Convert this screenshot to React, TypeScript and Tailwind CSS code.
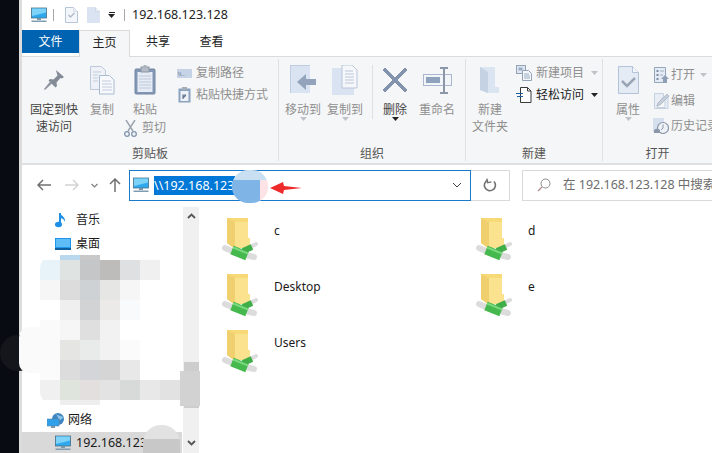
import React from "react";

const cjk = { fontFamily: '"Noto Sans","Noto Sans CJK SC",sans-serif' };

function Monitor({ w = 16, h = 16 }: { w?: number; h?: number }) {
  return (
    <svg width={w} height={h} viewBox="0 0 16 16" className="shrink-0">
      <rect x="0.5" y="1" width="15" height="10" fill="#2fa8ee" stroke="#4a6f86" strokeWidth="0.8" />
      <path d="M1 1.5h14v4L1 9z" fill="#7dd2f8" />
      <rect x="6" y="11" width="4" height="2" fill="#7c97a8" />
      <rect x="0.5" y="13.5" width="15" height="1.5" fill="#7f9cb0" />
    </svg>
  );
}

function DocSheet({ check }: { check?: boolean }) {
  return (
    <svg width="13" height="16" viewBox="0 0 13 16" className="shrink-0">
      <path d="M.5.5h8l4 4v11H.5z" fill={check ? "#f3f6fb" : "#d9e3f1"} stroke={check ? "#b7c5d8" : "#d9e3f1"} />
      <path d="M8.5.5v4h4" fill="#eef2f8" stroke="#c2cede" strokeWidth="0.6" />
      {check && <path d="M3.5 8l2 2 4-4" fill="none" stroke="#a9b4c2" strokeWidth="1.2" />}
    </svg>
  );
}

function Pin() {
  return (
    <svg width="22" height="22" viewBox="0 0 22 22">
      <path d="M13 1l8 7-2 1.500-1.500-.5-4 4.500.5 3.500-1.500 1.500-7-7 1.500-1.500 3.500.5 4-4-.5-1.500z" fill="#838b96" />
      <path d="M7.500 12L1 20l1 1 7-6.500z" fill="#8f969f" />
    </svg>
  );
}

function Copy() {
  return (
    <svg width="25" height="29" viewBox="0 0 25 29">
      <path d="M.5.500h11l4 4v19H.5z" fill="#eef2f8" stroke="#bcc9da" />
      <path d="M9.500 9.500h10l4.500 4.500v14H9.500z" fill="#f7f9fc" stroke="#a9bbd1" />
      <path d="M3 6h8M3 9h5M3 12h5M3 15h5M12 15h9M12 18h10M12 21h10M12 24h10" stroke="#c2cddb" />
    </svg>
  );
}

function Paste() {
  return (
    <svg width="22" height="30" viewBox="0 0 22 30">
      <rect x="1" y="4" width="20" height="25" rx="1" fill="#8397b4" stroke="#7388a6" />
      <rect x="3.500" y="7" width="15" height="20" fill="#e6ecf5" />
      <path d="M5 11h12M5 14h12M5 17h12M5 20h12M5 23h12" stroke="#bcc8d8" />
      <rect x="7" y="2" width="8" height="5" fill="#b4bcc6" stroke="#8c96a3" />
      <rect x="9.500" y="0" width="3" height="3" fill="#aab2bc" />
    </svg>
  );
}

function Scissors() {
  return (
    <svg width="13" height="17" viewBox="0 0 13 17">
      <path d="M2 0l7 11M11 0L4 11" stroke="#9aa3ad" strokeWidth="1.400" fill="none" />
      <circle cx="3" cy="14" r="2.300" fill="none" stroke="#7f93ad" strokeWidth="1.300" />
      <circle cx="10" cy="14" r="2.300" fill="none" stroke="#7f93ad" strokeWidth="1.300" />
    </svg>
  );
}

function PathIcon() {
  return (
    <svg width="15" height="9" viewBox="0 0 15 9">
      <rect width="15" height="9" fill="#c6d3e6" />
      <text x="1" y="7" fontSize="6" fill="#59667a" fontFamily="Liberation Sans">\\..</text>
    </svg>
  );
}

function ShortcutIcon() {
  return (
    <svg width="13" height="16" viewBox="0 0 13 16">
      <rect x="0.500" y="1.500" width="12" height="14" fill="#8ba2bf" />
      <rect x="2.500" y="4" width="8" height="10" fill="#eef2f8" />
      <rect x="4" y="0" width="5" height="3" fill="#a4acb6" />
      <path d="M5 12V8h3M8 8L5 11" stroke="#64778f" strokeWidth="1.200" fill="none" />
    </svg>
  );
}

function MoveTo() {
  return (
    <svg width="27" height="30" viewBox="0 0 27 30">
      <path d="M0 0h20v28H0z" fill="#d9e3f1" />
      <path d="M0 0h20v1H1v27H0z" fill="#bfcde0" />
      <path d="M26 14h-10v-5l-9 8 9 8v-5h10z" fill="#92a3bb" />
    </svg>
  );
}

function CopyTo() {
  return (
    <svg width="26" height="30" viewBox="0 0 26 30">
      <path d="M0 3h22v27H0z" fill="#d9e3f1" />
      <path d="M10 0h10l5 5v18H10z" fill="#f5f7fb" stroke="#b8c5d6" />
      <path d="M13 6h8M13 9h9M13 12h9M13 15h9M13 18h9" stroke="#bcc7d6" />
    </svg>
  );
}

function DeleteX() {
  return (
    <svg width="26" height="26" viewBox="0 0 26 26">
      <path d="M3 1L1 3l10 10L1 23l2 2 10-10 10 10 2-2-10-10L25 3l-2-2-10 10z" fill="#8493ad" stroke="#8493ad" />
    </svg>
  );
}

function Rename() {
  return (
    <svg width="29" height="27" viewBox="0 0 29 27">
      <rect x="0.500" y="7.500" width="28" height="11" fill="#f1f4f9" stroke="#a9b8cc" />
      <rect x="3" y="10" width="14" height="6" fill="#8fa2bd" />
      <path d="M17 1h8M17 26h8M21 1v25" stroke="#8b97a8" strokeWidth="2" />
    </svg>
  );
}

function NewFolder() {
  return (
    <svg width="20" height="28" viewBox="0 0 20 28">
      <path d="M0 1h15v20h4v6H8L0 24z" fill="#dbe5f2" />
      <path d="M0 1l8 5v21L0 24z" fill="#c4d2e4" />
    </svg>
  );
}

function NewItem() {
  return (
    <svg width="16" height="16" viewBox="0 0 16 16">
      <rect x="0.500" y="0.500" width="9" height="8" fill="#dfe6f0" stroke="#93a2b6" />
      <rect x="2.500" y="2.500" width="4" height="3" fill="#9badc4" />
      <path d="M6.500 5.500h6l3 3v7h-9z" fill="#f5f7fb" stroke="#93a2b6" />
      <path d="M8 9h5M8 11h6M8 13h6" stroke="#9badc4" />
    </svg>
  );
}

function EasyAccess() {
  return (
    <svg width="16" height="16" viewBox="0 0 16 16">
      <path d="M4.500.500h7l3.500 3.500v11.500H4.500z" fill="#fff" stroke="#3b3b3b" />
      <path d="M11.500.500V4H15" fill="none" stroke="#3b3b3b" />
      <path d="M0 6.500h7M1 9.500h6" stroke="#1f5fa8" strokeWidth="1.200" />
    </svg>
  );
}

function Properties() {
  return (
    <svg width="21" height="28" viewBox="0 0 21 28">
      <path d="M.5.500h14l6 6v21H.5z" fill="#e4ebf5" stroke="#b4c3d7" />
      <path d="M14.500.500v6h6" fill="#f4f7fb" stroke="#b4c3d7" />
      <path d="M4 15l5 5 8-8" fill="none" stroke="#9aa6b5" strokeWidth="2.500" />
    </svg>
  );
}

function OpenIcon() {
  return (
    <svg width="15" height="16" viewBox="0 0 15 16">
      <path d="M.5.500h11v15H.5z" fill="#e4ebf5" stroke="#95a5ba" />
      <path d="M2.500 3h2v2h-2zM2.500 7h2v2h-2zM2.500 11h2v2h-2z" fill="#7c8ea6" />
      <path d="M6 4h4M6 8h3" stroke="#a2afc0" />
      <path d="M11 8l4 4h-2v4h-4v-4H7z" fill="#8fa0b6" />
    </svg>
  );
}

function EditIcon() {
  return (
    <svg width="15" height="16" viewBox="0 0 15 16">
      <path d="M.5.500h9v3l-6 8-.5 3h8V7l3-3v11.500H.5z" fill="#e9eef6" stroke="#b4c3d7" strokeWidth="0.700" />
      <path d="M13 1l2 2-9 9-3 1 1-3z" fill="#c6cfda" stroke="#9ba8b8" strokeWidth="0.600" />
    </svg>
  );
}

function HistoryIcon() {
  return (
    <svg width="16" height="16" viewBox="0 0 16 16">
      <rect x="0" y="0" width="11" height="14" fill="#d5dfed" />
      <circle cx="10" cy="10" r="5.500" fill="#eef1f5" stroke="#8b98a9" strokeWidth="1.200" />
      <path d="M10 6.500V10l-2 2" fill="none" stroke="#8b98a9" />
      <path d="M1 12a4 4 0 016 0v3H1z" fill="#8b98a9" />
    </svg>
  );
}

function NetFolder() {
  return (
    <svg width="38" height="46" viewBox="0 0 38 46" className="shrink-0">
      <path d="M5 0h21v20h2v10H12L5 25z" fill="#f8d978" />
      <path d="M5 0l8 4v27l-8-6z" fill="#f0cf6e" />
      <path d="M13 4h13v16h2v10H13z" fill="#fbe28f" />
      <path d="M3 30l7 3" stroke="#dcdcdc" strokeWidth="6" strokeLinecap="round" />
      <path d="M24 37l8 2" stroke="#dcdcdc" strokeWidth="6" strokeLinecap="round" />
      <path d="M28 29l6-3" stroke="#dcdcdc" strokeWidth="4" strokeLinecap="round" />
      <path d="M10 32l15 6" stroke="#46b94e" strokeWidth="9" />
      <path d="M21 33l9-4" stroke="#3fae48" strokeWidth="6" />
      <path d="M11 29.500l15 6" stroke="#78d87c" strokeWidth="2" />
    </svg>
  );
}

function Caret({ light }: { light?: boolean }) {
  return (
    <svg width="7" height="4" viewBox="0 0 7 4" className="shrink-0">
      <path d="M0 0h7L3.500 4z" fill={light ? "#bfc3c8" : "#222"} />
    </svg>
  );
}

function Sep({ h = "h-[16px]" }: { h?: string }) {
  return <div className={`w-px bg-[#a8a8a8] ${h}`} />;
}

function LargeButton({
  icon,
  label,
  width,
  dark,
  caret,
}: {
  icon: React.ReactNode;
  label: React.ReactNode;
  width: string;
  dark?: boolean;
  caret?: "light" | "dark";
}) {
  return (
    <div className={`flex flex-col items-center ${width}`}>
      <div className="flex h-[36px] items-center justify-center">{icon}</div>
      <div className={`mt-[3px] text-center text-[12px] leading-[17px] whitespace-nowrap ${dark ? "text-[#444]" : "text-[#8f8f8f]"}`}>
        {label}
      </div>
      {caret && (
        <div className="-mt-[1px]">
          <Caret light={caret === "light"} />
        </div>
      )}
    </div>
  );
}

function SmallRow({
  icon,
  label,
  dark,
  caret,
  gap = "gap-[4px]",
  h = "h-[22px]",
}: {
  icon: React.ReactNode;
  label: string;
  dark?: boolean;
  caret?: "light" | "dark";
  gap?: string;
  h?: string;
}) {
  return (
    <div className={`flex items-center whitespace-nowrap text-[12px] ${h} ${gap} ${dark ? "text-[#222]" : "text-[#8f8f8f]"}`}>
      <div className="flex w-[16px] justify-center">{icon}</div>
      <span>{label}</span>
      {caret && (
        <span className="ml-[3px]">
          <Caret light={caret === "light"} />
        </span>
      )}
    </div>
  );
}

function Group({
  width,
  label,
  children,
  last,
}: {
  width: string;
  label: string;
  children: React.ReactNode;
  last?: boolean;
}) {
  return (
    <div className={`relative flex h-[102px] shrink-0 flex-col ${width} ${last ? "" : "border-r border-[#dfe0e1]"}`}>
      <div className="flex h-[88px] items-start pt-[3px]">{children}</div>
      <div className="text-center text-[12px] leading-[14px] text-[#555]">{label}</div>
    </div>
  );
}

function Chevron({ up }: { up?: boolean }) {
  return (
    <svg width="9" height="6" viewBox="0 0 9 6">
      <path d={up ? "M1 5l3.500-3.500L8 5" : "M1 1l3.500 3.500L8 1"} fill="none" stroke="#555" strokeWidth="1.800" />
    </svg>
  );
}

function NavRow({ icon, label, indent }: { icon: React.ReactNode; label: string; indent: string }) {
  return (
    <div className={`flex h-[24px] items-center text-[12px] text-[#1a1a1a] ${indent}`}>
      <div className="flex w-[21px] justify-start">{icon}</div>
      <span>{label}</span>
    </div>
  );
}

const mosaic: [number, number, string[]][] = [
  [255, 5, ["#fff", "#b9d8ee", "#c8c8c8"]],
  [260, 20, ["#e8f3f9", "#dfe3e2", "#c5c6c8", "#bdbcba", "#dfe0e2", "#f0f0f0"]],
  [280, 20, ["#f6f6f6", "#dcdcdc", "#cfd2d4", "#e6e6e4", "#f6f6f6", "#ffffff"]],
  [300, 20, ["#ffffff", "#efefef", "#d2d3d5", "#ebeae8", "#f9fafc", "#ffffff"]],
  [320, 20, ["#fafafa", "#f6f6f6", "#dfdfdf", "#f2f2f2", "#ffffff", "#ffffff"]],
  [340, 20, ["#fafafa", "#e5e5e3", "#e9eaea", "#f2f2f2", "#fbfbfb", "#ffffff"]],
  [360, 20, ["#fbfbfb", "#dcdcdc", "#d4d5d9", "#d5d5d5", "#e8e8e8", "#ffffff"]],
  [380, 20, ["#f0f0f0", "#dfe4dc", "#e2dfde", "#e3e3e3", "#d8d9d9", "#e8e8e8", "#e2e2e2"]],
  [400, 5, ["#ffffff", "#eeeeee", "#eeeeee"]],
];

export default function App() {
  return (
    <div className="relative flex h-[453px] w-[712px] overflow-hidden bg-white" style={cjk}>
      <div className="w-[19px] shrink-0 bg-[#080b12]" />
      <div className="w-[3px] shrink-0 bg-[#dcdcdc]" />
      <div className="flex min-w-0 flex-1 flex-col">
        {/* Title bar */}
        <div className="flex h-[30px] shrink-0 items-center pl-[9px] text-[#222]">
          <Monitor />
          <div className="ml-[6px]"><Sep h="h-[12px]" /></div>
          <div className="ml-[11px]"><DocSheet check /></div>
          <div className="ml-[9px]"><DocSheet /></div>
          <div className="ml-[8px] flex flex-col items-center gap-[1px]">
            <div className="h-px w-[6px] bg-[#222]" />
            <Caret />
          </div>
          <div className="ml-[9px]"><Sep h="h-[12px]" /></div>
          <span className="ml-[7px] text-[12.500px]">192.168.123.128</span>
        </div>
        {/* Tabs */}
        <div className="relative flex h-[27px] shrink-0 items-start border-b border-[#dadbdc] text-[12px]">
          <div className="flex h-[23px] w-[57px] items-center justify-center bg-[#0063b1] text-white">文件</div>
          <div className="relative z-10 flex h-[27px] w-[51px] items-center justify-center border-x border-t border-[#dadbdc] bg-[#f5f6f7] pb-[2px] text-[#222]">主页</div>
          <div className="flex h-[26px] w-[56px] items-center justify-center pb-[2px] text-[#222]">共享</div>
          <div className="flex h-[26px] w-[51px] items-center justify-center pb-[2px] text-[#222]">查看</div>
        </div>
        {/* Ribbon */}
        <div className="flex h-[108px] shrink-0 border-b-2 border-[#dfe0e1] bg-[#f5f6f7] pt-[2px]">
          <Group width="w-[257px]" label="剪贴板">
            <div className="ml-[4px]">
              <LargeButton width="w-[56px]" dark icon={<Pin />} label={<>固定到快<br />速访问</>} />
            </div>
            <div className="ml-[2px]"><LargeButton width="w-[36px]" icon={<Copy />} label="复制" /></div>
            <div className="ml-[4px] flex w-[42px] flex-col items-center">
              <LargeButton width="w-[42px]" icon={<Paste />} label="粘贴" />
              <div className="mt-[1px] flex items-center gap-[5px] text-[12px] leading-[18px] whitespace-nowrap text-[#8f8f8f]">
                <Scissors />
                <span>剪切</span>
              </div>
            </div>
            <div className="ml-[10px] flex flex-col">
              <SmallRow icon={<PathIcon />} label="复制路径" />
              <SmallRow icon={<ShortcutIcon />} label="粘贴快捷方式" />
            </div>
          </Group>
          <Group width="w-[187px]" label="组织">
            <div className="ml-[3px]"><LargeButton width="w-[42px]" caret="light" icon={<MoveTo />} label="移动到" /></div>
            <LargeButton width="w-[42px]" caret="light" icon={<CopyTo />} label="复制到" />
            <div className="ml-[6px] mr-[4px] mt-[3px] h-[54px] w-px bg-[#dfe0e1]" />
            <LargeButton width="w-[36px]" dark caret="dark" icon={<DeleteX />} label="删除" />
            <div className="ml-[5px]"><LargeButton width="w-[38px]" icon={<Rename />} label="重命名" /></div>
          </Group>
          <Group width="w-[137px]" label="新建">
            <div className="ml-[3px]"><LargeButton width="w-[42px]" icon={<NewFolder />} label={<>新建<br />文件夹</>} /></div>
            <div className="ml-[5px] flex flex-col">
              <SmallRow icon={<NewItem />} label="新建项目" caret="light" gap="gap-[4px]" />
              <SmallRow icon={<EasyAccess />} label="轻松访问" caret="dark" dark gap="gap-[4px]" />
            </div>
          </Group>
          <Group width="w-[109px]" label="打开" last>
            <div className="ml-[8px]"><LargeButton width="w-[34px]" caret="light" icon={<Properties />} label="属性" /></div>
            <div className="ml-[8px] flex flex-col">
              <SmallRow icon={<OpenIcon />} label="打开" caret="light" gap="gap-[2px]" h="h-[26px]" />
              <SmallRow icon={<EditIcon />} label="编辑" gap="gap-[2px]" h="h-[25px]" />
              <SmallRow icon={<HistoryIcon />} label="历史记录" gap="gap-[2px]" h="h-[25px]" />
            </div>
          </Group>
        </div>
        {/* Address row */}
        <div className="flex h-[42px] shrink-0 items-center pb-[2px] pl-[15px]">
          <svg width="14" height="12" viewBox="0 0 14 12">
            <path d="M6 1L1 6l5 5M1 6h13" fill="none" stroke="#707070" strokeWidth="1.500" />
          </svg>
          <svg className="ml-[14px]" width="14" height="12" viewBox="0 0 14 12">
            <path d="M8 1l5 5-5 5M13 6H0" fill="none" stroke="#d4d4d4" strokeWidth="1.500" />
          </svg>
          <svg className="ml-[12px]" width="7" height="5" viewBox="0 0 7 5">
            <path d="M.5 1l3 3 3-3" fill="none" stroke="#808080" strokeWidth="1.200" />
          </svg>
          <svg className="ml-[11px]" width="12" height="14" viewBox="0 0 12 14">
            <path d="M1 6l5-5 5 5M6 1v13" fill="none" stroke="#707070" strokeWidth="1.500" />
          </svg>
          <div className="ml-[8px] flex h-[31px] w-[342px] items-center border border-[#1979ca] pl-[3px] pr-[8px]">
            <Monitor />
            <span className="ml-[5px] bg-[#0078d7] pr-[1px] text-[12.500px] leading-[19px] text-white">\\192.168.123</span>
            <div className="flex-1" />
            <svg width="10" height="6" viewBox="0 0 10 6">
              <path d="M1 1l4 4 4-4" fill="none" stroke="#444" strokeWidth="1" />
            </svg>
          </div>
          <div className="flex h-[31px] w-[39px] items-center justify-center border border-l-0 border-[#d9d9d9]">
            <svg width="14" height="14" viewBox="0 0 14 14">
              <path d="M11 3.500A5.500 5.500 0 1 1 5 2" fill="none" stroke="#707070" strokeWidth="1.600" />
              <path d="M4 .5v4h4" fill="none" stroke="#707070" strokeWidth="1.300" transform="rotate(-10 5 2)" />
            </svg>
          </div>
          <div className="ml-[12px] flex h-[31px] flex-1 items-center overflow-hidden border border-r-0 border-[#d9d9d9] pl-[14px]">
            <svg width="14" height="14" viewBox="0 0 14 14" className="shrink-0">
              <circle cx="8.500" cy="5.500" r="4.500" fill="none" stroke="#8a8a8a" />
              <path d="M5 9l-4 4" stroke="#b08a8a" strokeWidth="1.200" />
            </svg>
            <span className="ml-[12px] text-[12.500px] whitespace-nowrap text-[#6d6d6d]">在 192.168.123.128 中搜索</span>
          </div>
        </div>
        {/* Body */}
        <div className="flex min-h-0 flex-1">
          <div className="relative w-[177px] shrink-0">
            <div className="flex h-[201px] flex-col pt-[1px]">
              <NavRow
                indent="pl-[33px]"
                label="音乐"
                icon={
                  <svg width="12" height="16" viewBox="0 0 12 16">
                    <path d="M5 1v11" stroke="#1e8fe6" strokeWidth="2" />
                    <ellipse cx="3.500" cy="12.500" rx="3.500" ry="2.800" fill="#1e8fe6" />
                    <path d="M5 1c1 3 6 4 5 9-1-3-3-4-5-4z" fill="#1e8fe6" />
                  </svg>
                }
              />
              <NavRow
                indent="pl-[33px]"
                label="桌面"
                icon={
                  <svg width="16" height="12" viewBox="0 0 16 12">
                    <rect width="16" height="12" fill="#1e96ee" />
                    <rect x="1" y="1" width="14" height="8" fill="#5ebcf7" />
                    <rect x="0" y="10" width="16" height="2" fill="#0f5f9e" />
                  </svg>
                }
              />
            </div>
            <NavRow
              indent="pl-[25px]"
              label="网络"
              icon={
                <svg width="17" height="15" viewBox="0 0 17 15">
                  <circle cx="11" cy="6" r="6" fill="#3f86c0" />
                  <path d="M8 1c3 1 2 4 5 6 2-1 3-2 3-3" fill="#8cc5e8" />
                  <rect x="0" y="6" width="12" height="7" fill="#2fa0ea" stroke="#5a88a8" strokeWidth="0.600" />
                  <rect x="4" y="13" width="4" height="2" fill="#7c97a8" />
                </svg>
              }
            />
            <div className="flex h-[22px] w-[160px] items-center bg-[#d9d9d9] pl-[33px] text-[12px] text-[#1a1a1a]">
              <div className="w-[21px]"><Monitor /></div>
              <span className="text-[12.500px]">192.168.123</span>
            </div>
            {/* Scrollbar */}
            <div className="absolute bottom-0 right-0 top-0 flex w-[16px] flex-col items-center bg-[#f0f0f0]">
              <div className="mt-[6px]"><Chevron up /></div>
              <div className="mt-[143px] h-[46px] w-[15px] bg-[#cdcdcd]" />
              <div className="flex-1" />
              <div className="mb-[7px]"><Chevron /></div>
            </div>
          </div>
          <div className="grid flex-1 auto-rows-[56px] grid-cols-[254px_1fr] content-start pl-[23px] pt-[11px] text-[12px] text-[#1a1a1a]">
            {["c", "d", "Desktop", "e", "Users"].map((n) => (
              <div key={n} className="flex h-[56px] items-start">
                <NetFolder />
                <span className="ml-[14px] mt-[4px] leading-[18px]">{n}</span>
              </div>
            ))}
          </div>
        </div>
      </div>

      {/* Censoring blobs over the picture */}
      <div className="absolute left-[232px] top-[170px] flex h-[33px] w-[36px] flex-col overflow-hidden rounded-[16px]">
        <div className="h-[10px] bg-[#c9e0f3]" />
        <div className="flex flex-1">
          <div className="w-[28px] bg-[#7fb4e6]" />
          <div className="flex-1 bg-[#fde3e6]" />
        </div>
      </div>
      <svg className="absolute left-[270px] top-[182px]" width="33" height="12" viewBox="0 0 33 12">
        <path d="M0 6L13 0l1 4 18 2-18 2-1 4z" fill="#ee2a2a" />
      </svg>
      <div className="absolute left-0 top-[335px] h-[36px] w-[36px] rounded-full bg-[#14161b]" />
      <div className="absolute left-[19px] top-[327px] h-[46px] w-[42px] rounded-l-[10px] bg-[#fafafa]" />
      <div className="absolute left-[40px] top-[255px] flex w-[160px] flex-col overflow-hidden rounded-[14px]">
        {mosaic.map(([y, h, cells]) => (
          <div key={y} className="flex" style={{ height: h }}>
            {cells.map((c, i) => (
              <div key={i} className="w-[20px]" style={{ background: c }} />
            ))}
          </div>
        ))}
      </div>
      <div className="absolute left-[180px] top-[371px] h-[35px] w-[20px] bg-[#d2d2d2]" />
      <div className="absolute left-[143px] top-[425px] flex h-[28px] w-[37px] flex-col overflow-hidden rounded-t-[18px]">
        <div className="h-[14px] bg-[#e2e2e2]" />
        <div className="flex-1 bg-[#c8c8c8]" />
      </div>
    </div>
  );
}
